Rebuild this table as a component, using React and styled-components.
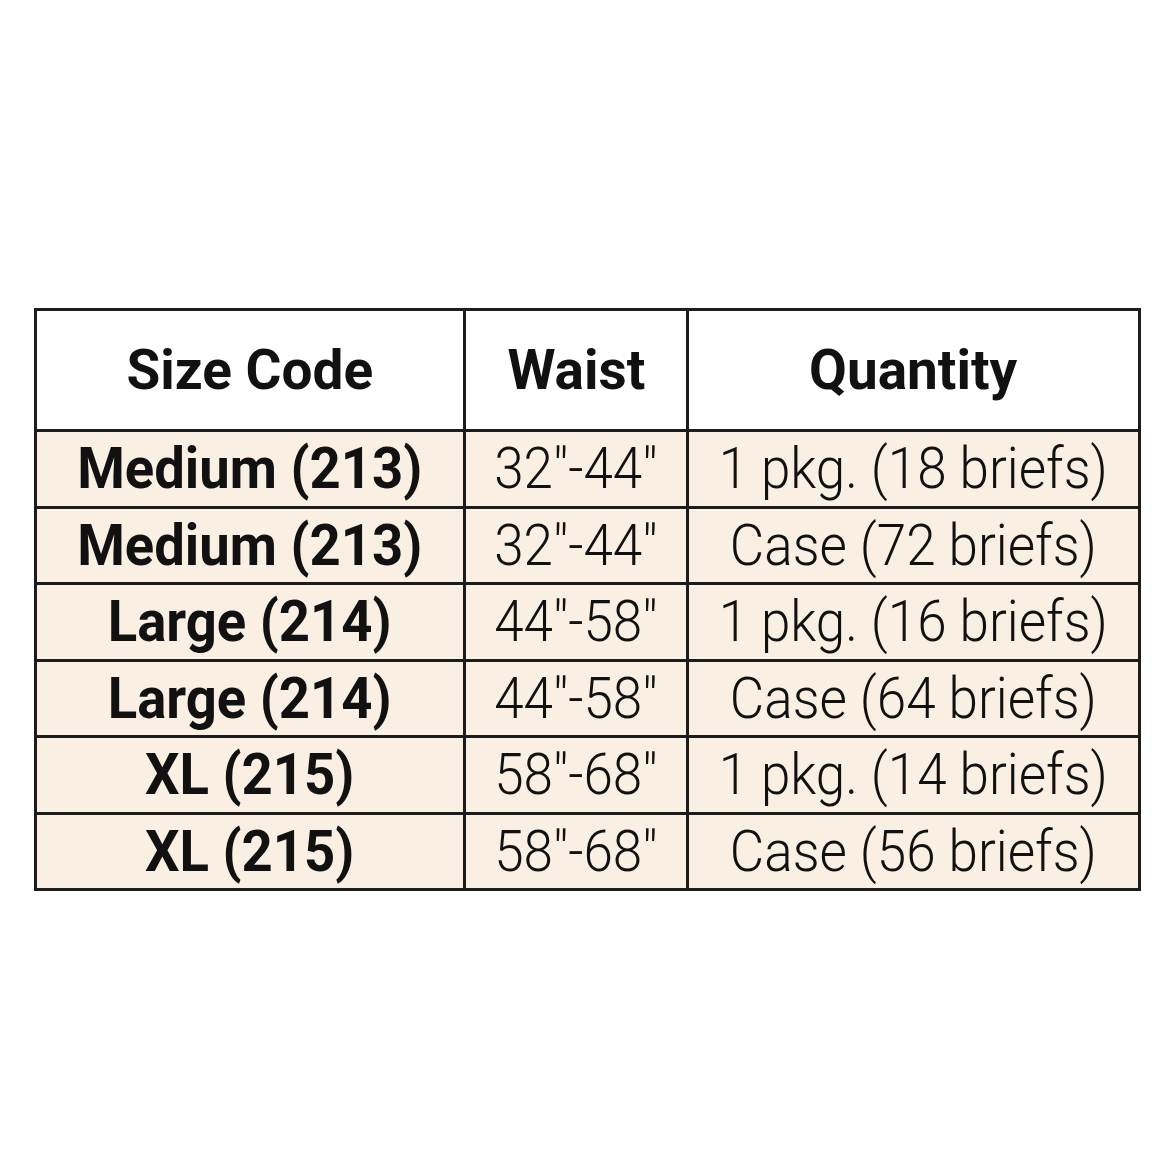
import React from 'react';
import styled, { createGlobalStyle } from 'styled-components';

const GlobalStyle = createGlobalStyle`
  html, body {
    margin: 0;
    padding: 0;
    background: #ffffff;
  }
`;

const Page = styled.div`
  width: 1168px;
  height: 1168px;
  padding-top: 308px;
  padding-left: 34px;
  box-sizing: border-box;
`;

const Grid = styled.div`
  display: grid;
  width: 1107px;
  box-sizing: border-box;
  grid-template-columns: 426px 220px 449px;
  grid-template-rows: 118px repeat(6, 73.5px);
  gap: 3px;
  border: 3px solid #1c1c1c;
  background: #1c1c1c;
`;

const Cell = styled.div`
  display: flex;
  align-items: center;
  justify-content: center;
  background: ${({ head }) => (head ? '#ffffff' : '#f9efe2')};
  color: #111111;
  font-family: Roboto, 'Liberation Sans', sans-serif;
  overflow: hidden;
`;

const Label = styled.span`
  display: inline-block;
  white-space: nowrap;
  font-size: ${({ size }) => size}px;
  font-weight: ${({ weight }) => weight};
  transform: scaleX(${({ squeeze }) => squeeze});
  transform-origin: center;
  line-height: 1;
`;

const rows = [
  ['Medium (213)', '32"-44"', '1 pkg. (18 briefs)'],
  ['Medium (213)', '32"-44"', 'Case (72 briefs)'],
  ['Large (214)', '44"-58"', '1 pkg. (16 briefs)'],
  ['Large (214)', '44"-58"', 'Case (64 briefs)'],
  ['XL (215)', '58"-68"', '1 pkg. (14 briefs)'],
  ['XL (215)', '58"-68"', 'Case (56 briefs)'],
];

export default function App() {
  return (
    <Page>
      <GlobalStyle />
      <Grid>
        {['Size Code', 'Waist', 'Quantity'].map((h) => (
          <Cell head key={h}>
            <Label size={56} weight={700} squeeze={0.98}>{h}</Label>
          </Cell>
        ))}
        {rows.map((r, i) => (
          <React.Fragment key={i}>
            <Cell>
              <Label size={57} weight={700} squeeze={0.955}>{r[0]}</Label>
            </Cell>
            <Cell>
              <Label size={57} weight={300} squeeze={0.93}>{r[1]}</Label>
            </Cell>
            <Cell>
              <Label size={57} weight={300} squeeze={0.93}>{r[2]}</Label>
            </Cell>
          </React.Fragment>
        ))}
      </Grid>
    </Page>
  );
}
